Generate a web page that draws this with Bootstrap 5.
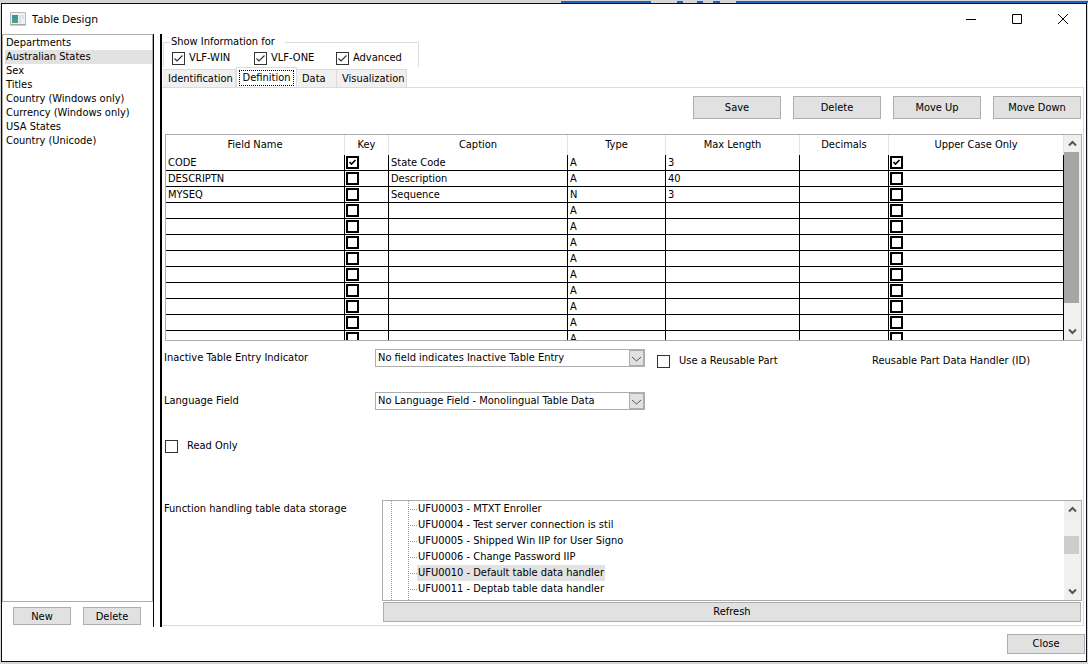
<!DOCTYPE html>
<html lang="en">
<head>
<meta charset="utf-8">
<meta name="viewport" content="width=device-width, initial-scale=1">
<title>Table Design</title>
<link href="https://cdn.jsdelivr.net/npm/bootstrap@5.3.0/dist/css/bootstrap.min.css" rel="stylesheet">
<style>
  :root { --edge: #adadad; --soft: #dcdcdc; --face: #e1e1e1; --ink: #0a0a14; }
  body { font: 11px/14px "DejaVu Sans Condensed", "DejaVu Sans", sans-serif; color: #000; background: #d6d6d6; }
  .desk-strip { height: 3px; background: linear-gradient(#d6d6d6 0 1px, transparent 1px),
    linear-gradient(90deg, #d6d6d6 0 561px, #1565b8 561px 651px, #d6d6d6 651px 677px, #1565b8 677px 683px, #d6d6d6 683px 697px, #1565b8 697px 703px, #d6d6d6 703px 713px, #1565b8 713px 720px, #d6d6d6 720px 736px, #1565b8 736px); }
  .win { margin: 0 1px 2px; border: 1px solid var(--ink); background: #fff; }
  .title-bar { height: 30px; padding-left: 8px; }
  .title-text { font: 11px/16px "Noto Sans", sans-serif; margin: 0 0 0 6px; }
  .cap-btn { width: 46px; height: 28px; border: 0; background: none; padding: 0; }
  .side { width: 152px; border-right: 1px solid #000; }
  .side-list { border: 1px solid var(--edge); padding: 1px 0 0 2px; }
  .side-list .list-group-item { border: 0; padding: 0 1px; line-height: 14px; color: #000; background: none; }
  .side-list .list-group-item.active { background: #e2e2e2; margin: 0; }
  .side-cmds { gap: 12px; padding: 5px 0 2px 11px; }
  .split { width: 8px; border-right: 2px solid #000; }
  .push { font: inherit; color: #000; background: var(--face); border: 1px solid var(--edge); border-radius: 0; padding: 0; height: 23px; }
  .push:hover { background: #e5f1fb; border-color: #0078d7; color: #000; }
  .push.low { height: 18px; padding-top: 1px; }
  .push.mid { height: 20px; }
  .w-cmd { width: 88px; }
  .w-side { width: 58px; }
  .w-close { width: 78px; }
  .show-box { width: 256px; height: 32px; margin: 1px 0 0 1px; border: 1px solid var(--soft); border-bottom: 0; }
  .show-box legend { float: none; width: 114px; margin: 0 0 2px 7px; padding: 0; font-size: inherit; line-height: 14px; }
  .tick { appearance: none; width: 13px; height: 13px; margin: 0; border: 1px solid #333; background: #fff center/11px 11px no-repeat; flex: none; }
  .tick:checked { background-image: url("data:image/svg+xml,%3Csvg xmlns='http://www.w3.org/2000/svg' viewBox='0 0 11 11'%3E%3Cpath d='M1.5 5.5L4 8l5.500-5.500' fill='none' stroke='%23333' stroke-width='1.200'/%3E%3C/svg%3E"); }
  .tick.heavy { display: block; margin: 1px 0 1px 1px; border: 2px solid #000; background-size: 9px 9px; }
  .tick.heavy:checked { background-image: url("data:image/svg+xml,%3Csvg xmlns='http://www.w3.org/2000/svg' viewBox='0 0 9 9'%3E%3Cpath d='M1.500 4L3.500 6l4-4' fill='none' stroke='%23000' stroke-width='1.600'/%3E%3C/svg%3E"); }
  .show-opts { padding-left: 8px; }
  .show-opts label { width: 82px; gap: 4px; }
  .tabs { height: 20px; padding-left: 1px; }
  .tabs .nav-link { font: inherit; line-height: 14px; height: 18px; padding: 2px 0 2px 5px; text-align: left; color: #000; background: #f0f0f0; border: 1px solid var(--soft); border-left: 0; border-bottom: 0; border-radius: 0; margin: 0; white-space: nowrap; }
  .tabs .nav-link.active { height: 21px; padding: 2px; background: #fff; border-left: 1px solid var(--soft); margin-bottom: -1px; text-align: center; }
  .tabs .nav-link.active span { display: block; height: 16px; border: 1px dotted #000; line-height: 13px; }
  .t-ident { width: 73px; } .t-def { width: 61px; } .t-data { width: 40px; } .t-vis { width: 70px; }
  .sheet { border: 1px solid var(--soft); border-left: 0; margin: 0 2px 1px 0; padding: 8px 1px 3px 2px; }
  .cmds { gap: 12px; padding-right: 1px; margin-bottom: 15px; }
  .boxed { border: 1px solid var(--edge); margin-left: 1px; }
  .grid-box { height: 207px; }
  .data-grid { table-layout: fixed; width: 100%; border-collapse: separate; border-spacing: 0; }
  .data-grid th { height: 20px; padding: 0; font-weight: 400; text-align: center; border-right: 1px solid #e3e3e3; }
  .data-grid td { height: 16px; padding: 0 2px; line-height: 15px; white-space: nowrap; border: solid #000; border-width: 0 1px 1px 0; }
  .data-grid td.flush { padding: 0; }
  .sbar { width: 17px; background: #f0f0f0; flex: none; }
  .sbar button { width: 17px; height: 17px; border: 0; padding: 0; background: none; line-height: 0; }
  .thumb { background: #a6a6a6; width: 15px; height: 151px; }
  .thumb.pale { background: #cdcdcd; height: 18px; margin-top: 18px; }
  .field-row { margin-top: 8px; }
  .field-row.next { margin-top: 20px; }
  .lab { width: 211px; flex: none; padding-top: 2px; }
  .lab.wide { width: 217px; }
  .drop { appearance: none; width: 270px; height: 18px; padding: 0 18px 0 2px; border: 1px solid var(--edge); border-radius: 0; color: #000; font: inherit; line-height: 14px;
    background: #fff url("data:image/svg+xml,%3Csvg xmlns='http://www.w3.org/2000/svg' width='15' height='16'%3E%3Cpath d='M0 0h15v16H0z' fill='%23adadad'/%3E%3Cpath d='M1 1h13v14H1z' fill='%23e1e1e1'/%3E%3Cpath d='M3 7l4.500 4L12 7' fill='none' stroke='%23555'/%3E%3C/svg%3E") right center no-repeat; }
  .reuse { width: 215px; gap: 9px; margin: 5px 0 0 12px; }
  .reuse-id { margin-top: 5px; }
  .read-only { gap: 9px; margin: 29px 0 0 1px; }
  .tree-box { height: 101px; margin-bottom: 1px; }
  .tree { list-style: none; margin: 0; padding: 0 0 0 34px; height: 99px;
    background: repeating-linear-gradient(#999 0 1px, #fff 1px 2px) 8px 0/1px 100% no-repeat, repeating-linear-gradient(#999 0 1px, #fff 1px 2px) 25px 0/1px 100% no-repeat; }
  .tree li { height: 16px; line-height: 16px; margin-left: -7px; padding-left: 7px; background: repeating-linear-gradient(90deg, #999 0 1px, #fff 1px 2px) 0 8px/7px 1px no-repeat; }
  .tree span { display: inline-block; padding: 0 1px; }
  .tree .sel { background: #e2e2e2; }
  .refresh { margin: 0 1px 0 2px; }
  .foot { height: 34px; padding-right: 1px; }
</style>
</head>
<body>
<div class="min-vh-100 d-flex flex-column">
  <div class="desk-strip"></div>
  <div class="win flex-grow-1 d-flex flex-column">
    <header class="title-bar d-flex align-items-center">
      <svg width="16" height="14" viewBox="0 0 16 14" aria-hidden="true"><defs><linearGradient id="g" x2="0.3" y2="1"><stop stop-color="#4682b4"/><stop offset="1" stop-color="#48a86c"/></linearGradient></defs><path d="M.5.5h15v12H.5z" fill="#edf1f3" stroke="#b4bcc2"/><path d="M0 13h16" stroke="#999"/><path d="M2 3h6v8H2z" fill="url(#g)"/><path d="M9 3h2v8H9zM12 3h2v4h-2z" fill="#d5e0e8"/></svg>
      <h1 class="title-text flex-grow-1">Table Design</h1>
      <button class="cap-btn" aria-label="Minimize"><svg width="12" height="12"><path d="M1 6.500h10" stroke="#000"/></svg></button>
      <button class="cap-btn" aria-label="Maximize"><svg width="12" height="12"><path d="M1.500 1.500h9v9h-9z" fill="none" stroke="#000"/></svg></button>
      <button class="cap-btn" aria-label="Close window"><svg width="12" height="12"><path d="M1 1l10 10M11 1L1 11" stroke="#000"/></svg></button>
    </header>

    <div class="d-flex flex-grow-1">
      <aside class="side flex-shrink-0 d-flex flex-column">
        <div class="side-list list-group rounded-0 flex-grow-1">
          <a href="#" class="list-group-item">Departments</a>
          <a href="#" class="list-group-item active">Australian States</a>
          <a href="#" class="list-group-item">Sex</a>
          <a href="#" class="list-group-item">Titles</a>
          <a href="#" class="list-group-item">Country (Windows only)</a>
          <a href="#" class="list-group-item">Currency (Windows only)</a>
          <a href="#" class="list-group-item">USA States</a>
          <a href="#" class="list-group-item">Country (Unicode)</a>
        </div>
        <div class="side-cmds d-flex">
          <button class="btn push low w-side">New</button>
          <button class="btn push low w-side">Delete</button>
        </div>
      </aside>
      <div class="split flex-shrink-0"></div>

      <main class="flex-grow-1 d-flex flex-column">
        <fieldset class="show-box">
          <legend>Show Information for</legend>
          <div class="show-opts d-flex">
            <label class="d-flex align-items-center"><input type="checkbox" class="tick" checked>VLF-WIN</label>
            <label class="d-flex align-items-center"><input type="checkbox" class="tick" checked>VLF-ONE</label>
            <label class="d-flex align-items-center"><input type="checkbox" class="tick" checked>Advanced</label>
          </div>
        </fieldset>
        <nav class="tabs d-flex align-items-end">
          <button class="nav-link t-ident">Identification</button>
          <button class="nav-link active t-def" aria-current="page"><span>Definition</span></button>
          <button class="nav-link t-data">Data</button>
          <button class="nav-link t-vis">Visualization</button>
        </nav>

        <section class="sheet flex-grow-1 d-flex flex-column">
          <div class="cmds d-flex justify-content-end">
            <button class="btn push w-cmd">Save</button>
            <button class="btn push w-cmd">Delete</button>
            <button class="btn push w-cmd">Move Up</button>
            <button class="btn push w-cmd">Move Down</button>
          </div>

          <div class="boxed grid-box d-flex overflow-hidden">
            <div class="flex-grow-1 overflow-hidden">
              <table class="data-grid">
                <colgroup><col style="width:179px"><col style="width:44px"><col style="width:179px"><col style="width:98px"><col style="width:134px"><col style="width:89px"><col style="width:175px"></colgroup>
                <thead><tr><th>Field Name</th><th>Key</th><th>Caption</th><th>Type</th><th>Max Length</th><th>Decimals</th><th>Upper Case Only</th></tr></thead>
                <tbody id="rows"></tbody>
              </table>
            </div>
            <div class="sbar d-flex flex-column">
              <button aria-label="Scroll up"><svg width="9" height="7"><path d="M1 5.500l3.500-3.500L8 5.500" fill="none" stroke="#555" stroke-width="2"/></svg></button>
              <div class="thumb"></div>
              <button class="mt-auto" aria-label="Scroll down"><svg width="9" height="7"><path d="M1 1.500l3.500 3.500L8 1.500" fill="none" stroke="#555" stroke-width="2"/></svg></button>
            </div>
          </div>

          <div class="field-row d-flex align-items-start">
            <label class="lab" for="inactive">Inactive Table Entry Indicator</label>
            <select id="inactive" class="drop"><option>No field indicates Inactive Table Entry</option></select>
            <label class="reuse d-flex align-items-center"><input type="checkbox" class="tick">Use a Reusable Part</label>
            <span class="reuse-id">Reusable Part Data Handler (ID)</span>
          </div>
          <div class="field-row next d-flex align-items-start mt-4">
            <label class="lab" for="lang">Language Field</label>
            <select id="lang" class="drop"><option>No Language Field - Monolingual Table Data</option></select>
          </div>
          <label class="read-only d-flex align-items-center"><input type="checkbox" class="tick">Read Only</label>
          <div class="d-flex mt-auto">
            <span class="lab wide">Function handling table data storage</span>
            <div class="flex-grow-1">
              <div class="boxed tree-box d-flex">
                <ul class="tree flex-grow-1" role="tree">
                  <li><span>UFU0003 - MTXT Enroller</span></li>
                  <li><span>UFU0004 - Test server connection is stil</span></li>
                  <li><span>UFU0005 - Shipped Win IIP for User Signo</span></li>
                  <li><span>UFU0006 - Change Password IIP</span></li>
                  <li><span class="sel">UFU0010 - Default table data handler</span></li>
                  <li><span>UFU0011 - Deptab table data handler</span></li>
                </ul>
                <div class="sbar d-flex flex-column">
                  <button aria-label="Scroll up"><svg width="9" height="7"><path d="M1 5.500l3.500-3.500L8 5.500" fill="none" stroke="#555" stroke-width="2"/></svg></button>
                  <div class="thumb pale"></div>
                  <button class="mt-auto" aria-label="Scroll down"><svg width="9" height="7"><path d="M1 1.500l3.500 3.500L8 1.500" fill="none" stroke="#555" stroke-width="2"/></svg></button>
                </div>
              </div>
              <div class="refresh"><button class="btn push mid w-100 d-block">Refresh</button></div>
            </div>
          </div>
        </section>
      </main>
    </div>

    <footer class="foot d-flex justify-content-end align-items-center">
      <button class="btn push mid w-close">Close</button>
    </footer>
  </div>
</div>
<script>
  const fields = [
    ['CODE', true, 'State Code', 'A', '3', true],
    ['DESCRIPTN', false, 'Description', 'A', '40', false],
    ['MYSEQ', false, 'Sequence', 'N', '3', false]
  ];
  while (fields.length < 12) fields.push(['', false, '', 'A', '', false]);
  const box = (name, on) => `<td class="flush"><input type="checkbox" class="tick heavy" aria-label="${name}"${on ? ' checked' : ''}></td>`;
  document.getElementById('rows').innerHTML = fields.map(f =>
    `<tr><td>${f[0]}</td>${box('Key', f[1])}<td>${f[2]}</td><td>${f[3]}</td><td>${f[4]}</td><td></td>${box('Upper case only', f[5])}</tr>`).join('');
</script>
<script src="https://cdn.jsdelivr.net/npm/bootstrap@5.3.0/dist/js/bootstrap.bundle.min.js"></script>
</body>
</html>
